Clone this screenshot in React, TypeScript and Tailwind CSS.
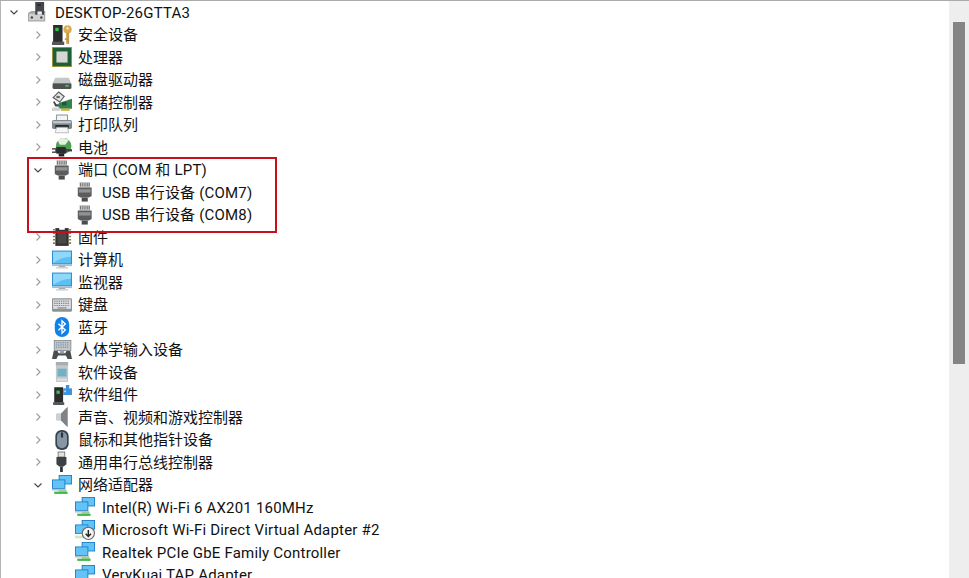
import type { ReactNode } from "react";

function Ico({ children }: { children: ReactNode }) {
  return (
    <svg width="20" height="20" viewBox="0 0 18 18" className="-mx-px shrink-0 overflow-visible">
      {children}
    </svg>
  );
}

const ComputerIcon = () => (
  <Ico>
    <path d="M0 10 L3 8 H15.5 V17.5 H0 Z" fill="#a6a6a6" />
    <rect x="1" y="10.5" width="13.5" height="6" fill="#d0d0d0" />
    <rect x="6.5" y="0" width="8" height="11.5" fill="#44474a" />
    <rect x="8.5" y="2" width="3" height="1.5" fill="#25282a" />
    <rect x="8.5" y="8.5" width="4" height="3" fill="#ececec" />
    <circle cx="3.5" cy="14" r="1.1" fill="#4b4b4b" />
    <circle cx="12" cy="14" r="1.1" fill="#4b4b4b" />
  </Ico>
);

const SecurityIcon = () => (
  <Ico>
    <rect x="1" y="0" width="8.5" height="16" fill="#2a2c2e" />
    <rect x="0" y="15" width="11" height="3" fill="#55585a" />
    <rect x="3" y="2.5" width="3" height="3" fill="#35c04a" />
    <circle cx="14" cy="4" r="3.7" fill="#d9ad55" />
    <circle cx="14" cy="3" r="1" fill="#fff4d0" />
    <rect x="12.8" y="7" width="2.6" height="10" fill="#c99a45" />
    <rect x="11.5" y="12" width="2" height="1.5" fill="#c99a45" />
  </Ico>
);

const CpuIcon = () => (
  <Ico>
    <rect x="0" y="0" width="18" height="18" fill="#a69b45" />
    <rect x="0.8" y="0.8" width="16.4" height="16.4" fill="#1f5f36" />
    <rect x="4" y="4" width="10" height="10" fill="#d6d6d2" />
  </Ico>
);

const DiskIcon = () => (
  <Ico>
    <path d="M3 7 H15 L17.5 12 H0.5 Z" fill="#c4c7c7" />
    <rect x="0.5" y="12" width="17" height="5" rx="1" fill="#4d5152" />
    <rect x="12" y="13.5" width="3" height="1.5" fill="#4fc05a" />
  </Ico>
);

const StorageIcon = () => (
  <Ico>
    <path d="M1 5 L6 0 L11 4 L7 9 Z" fill="#e6e6e6" stroke="#5f5f5f" />
    <rect x="4" y="3.5" width="3" height="2" fill="#666" />
    <path d="M1 9 L3 13 H9 V11 H4 L2 8 Z" fill="#444" />
    <path d="M6 10 L18 6 V15 H6 Z" fill="#32834e" />
    <rect x="9" y="9" width="4" height="3" fill="#1f5733" />
    <rect x="8" y="15" width="8" height="2" fill="#d6b13c" />
    <rect x="0" y="14" width="7" height="3" fill="#d2d2d2" />
  </Ico>
);

const PrinterIcon = () => (
  <Ico>
    <path d="M4 0 H14 V5 H4 Z" fill="#f4f4f4" stroke="#7d8488" strokeWidth="0.8" />
    <rect x="0" y="4.5" width="18" height="8" rx="1.5" fill="#7f888d" />
    <rect x="1" y="5.5" width="16" height="2" fill="#c4cbcf" />
    <rect x="3" y="9" width="12" height="3" fill="#26292b" />
    <path d="M4 11 H14 L15 16 H3 Z" fill="#f6f6f6" stroke="#a0a0a0" strokeWidth="0.6" />
  </Ico>
);

const BatteryIcon = () => (
  <Ico>
    <circle cx="10.5" cy="8" r="7" fill="#4f9f54" />
    <path d="M5 3 Q10 -1 15 3 L12 7 H7 Z" fill="#e3efe0" />
    <rect x="3" y="9" width="10" height="6" rx="2" fill="#2a2d2f" />
    <rect x="0" y="10" width="4" height="1.4" fill="#555" />
    <rect x="0" y="13" width="4" height="1.4" fill="#555" />
    <rect x="12" y="11" width="6" height="2" fill="#3c3f41" />
    <rect x="6" y="15" width="5" height="2.5" fill="#222" />
  </Ico>
);

const PortIcon = () => (
  <Ico>
    <rect x="4" y="0" width="9.5" height="5" fill="#c6c6c6" />
    <path d="M5 1 V4 M7 1 V4 M9 1 V4 M11 1 V4 M12.8 1 V4" stroke="#666" strokeWidth="0.8" />
    <path d="M2.5 5 H15 V12.5 L12.5 14 H5 L2.5 12.5 Z" fill="#5a5c5e" />
    <rect x="3.5" y="6.5" width="10.5" height="3" fill="#909294" />
    <rect x="6" y="14" width="5.5" height="3.6" fill="#4a4c4e" />
  </Ico>
);

const FirmwareIcon = () => (
  <Ico>
    <rect x="3" y="1" width="12" height="16" fill="#333" />
    <rect x="6.5" y="0" width="5" height="2.5" fill="#fff" />
    <path d="M0.8 2.5 H3 M0.8 5.5 H3 M0.8 8.5 H3 M0.8 11.5 H3 M0.8 14.5 H3 M15 2.5 H17.2 M15 5.5 H17.2 M15 8.5 H17.2 M15 11.5 H17.2 M15 14.5 H17.2" stroke="#8d7f4e" strokeWidth="1.4" />
    <rect x="5" y="4" width="8" height="11" fill="#484848" />
  </Ico>
);

const MonitorIcon = () => (
  <Ico>
    <rect x="0" y="0.5" width="18" height="12.5" fill="#2f8fd6" />
    <rect x="1" y="1.5" width="16" height="10.5" fill="#5cc0f4" />
    <path d="M1 1.5 H17 V6 Q8 6 1 12 Z" fill="#90d8fa" />
    <rect x="0" y="13" width="18" height="1.5" fill="#b0bcc3" />
    <rect x="6" y="14.5" width="6" height="1" fill="#9aa3a8" />
    <rect x="3.5" y="15.5" width="11" height="1.2" fill="#c9ced1" />
  </Ico>
);

const KeyboardIcon = () => (
  <Ico>
    <rect x="0" y="3" width="18" height="12" rx="1" fill="#8f9193" />
    <rect x="1" y="4" width="16" height="8.5" fill="#dcdde0" />
    <path d="M2 5.5 H16 M2 7.5 H16 M2 9.5 H16" stroke="#84878a" strokeWidth="1" strokeDasharray="1.2 0.8" />
    <rect x="5" y="11" width="8" height="1.2" fill="#8f9193" />
  </Ico>
);

const BluetoothIcon = () => (
  <Ico>
    <rect x="2.5" y="0" width="13" height="18" rx="6.5" fill="#1280e8" />
    <path d="M5.8 6 L12 11.8 L9 14.6 V3.4 L12 6.2 L5.8 12" fill="none" stroke="#fff" strokeWidth="1.2" />
  </Ico>
);

const HidIcon = () => (
  <Ico>
    <rect x="2" y="0.5" width="15" height="9" fill="#c2c7cc" stroke="#7c8084" strokeWidth="0.7" />
    <path d="M3.5 2.5 H15.5 M3.5 4.5 H15.5 M3.5 6.5 H15.5" stroke="#6f8ca3" strokeWidth="1" strokeDasharray="1.2 0.8" />
    <path d="M0 17 L1.5 10 H5 L6 12 H12 L13 10 H16.5 L18 17 H14 L12.5 14 H5.5 L4 17 Z" fill="#4b4e51" />
    <rect x="7" y="10" width="4" height="2" fill="#9a9ea1" />
  </Ico>
);

const SoftDeviceIcon = () => (
  <Ico>
    <rect x="3.5" y="0" width="11" height="18" rx="1" fill="#c4c8ca" />
    <rect x="3.5" y="0" width="11" height="3" fill="#a9adb0" />
    <rect x="5" y="6" width="8" height="7" fill="#6fb2c4" />
    <rect x="4.5" y="15" width="9" height="2" fill="#dde0e1" />
  </Ico>
);

const SoftComponentIcon = () => (
  <Ico>
    <rect x="2" y="2" width="8" height="14" fill="#2a2c2e" />
    <rect x="1" y="15.5" width="10" height="2.5" fill="#55585a" />
    <rect x="4" y="5" width="3" height="3" fill="#35c04a" />
    <rect x="10" y="3" width="8" height="6" fill="#3c94dc" />
    <rect x="12.5" y="0" width="3" height="3.5" fill="#3c94dc" />
    <rect x="11" y="5" width="1.5" height="1.5" fill="#cfe6f8" />
  </Ico>
);

const AudioIcon = () => (
  <Ico>
    <path d="M4 6 H8 L14 0 V18 L8 12 H4 Z" fill="#a3a8aa" />
    <path d="M8 6 L14 0 V18 L8 12 Z" fill="#7e8385" />
    <rect x="4" y="6" width="4" height="6" fill="#cdd0d1" />
  </Ico>
);

const MouseIcon = () => (
  <Ico>
    <rect x="3" y="0" width="12" height="18" rx="5.5" fill="#36434e" />
    <rect x="4.5" y="1.5" width="9" height="15" rx="4.5" fill="#8696a6" />
    <rect x="8" y="2" width="2" height="5" rx="1" fill="#2d353c" />
  </Ico>
);

const UsbIcon = () => (
  <Ico>
    <rect x="5.5" y="0" width="6" height="4.5" fill="#e2e2e2" stroke="#666" strokeWidth="0.7" />
    <path d="M4 4.5 H13 V11 L10.5 13 H6.5 L4 11 Z" fill="#3e4144" />
    <rect x="7.3" y="13" width="2.4" height="5" fill="#2a2d2f" />
  </Ico>
);

const Screen = ({ x, y }: { x: number; y: number }) => (
  <g>
    <rect x={x} y={y} width="12" height="8.5" fill="#1f7fc8" />
    <rect x={x + 0.8} y={y + 0.8} width="10.4" height="6.9" fill="#62c3f4" />
  </g>
);

const NetworkIcon = () => (
  <Ico>
    <rect x="6" y="13" width="7" height="2" fill="#8fd272" />
    <rect x="2" y="15" width="12" height="2" fill="#3db84a" />
    <Screen x={6} y={0} />
    <Screen x={0} y={4} />
    <rect x="0" y="12.5" width="12" height="1.5" fill="#b6c3cb" />
  </Ico>
);

const WifiDirectIcon = () => (
  <Ico>
    <rect x="0" y="14" width="9" height="2.5" fill="#cfe8c4" />
    <Screen x={6} y={0} />
    <Screen x={0} y={4} />
    <circle cx="12" cy="12" r="5.5" fill="#f4f4f4" stroke="#666b6e" />
    <path d="M12 9 V14.5 M9.6 12.4 L12 14.8 L14.4 12.4" stroke="#222" strokeWidth="1.3" fill="none" />
  </Ico>
);

type Row = { label: string; depth: 0 | 1 | 2; icon: ReactNode; open?: boolean };

const rows: Row[] = [
  { label: "DESKTOP-26GTTA3", depth: 0, icon: <ComputerIcon />, open: true },
  { label: "安全设备", depth: 1, icon: <SecurityIcon /> },
  { label: "处理器", depth: 1, icon: <CpuIcon /> },
  { label: "磁盘驱动器", depth: 1, icon: <DiskIcon /> },
  { label: "存储控制器", depth: 1, icon: <StorageIcon /> },
  { label: "打印队列", depth: 1, icon: <PrinterIcon /> },
  { label: "电池", depth: 1, icon: <BatteryIcon /> },
  { label: "端口 (COM 和 LPT)", depth: 1, icon: <PortIcon />, open: true },
  { label: "USB 串行设备 (COM7)", depth: 2, icon: <PortIcon /> },
  { label: "USB 串行设备 (COM8)", depth: 2, icon: <PortIcon /> },
  { label: "固件", depth: 1, icon: <FirmwareIcon /> },
  { label: "计算机", depth: 1, icon: <MonitorIcon /> },
  { label: "监视器", depth: 1, icon: <MonitorIcon /> },
  { label: "键盘", depth: 1, icon: <KeyboardIcon /> },
  { label: "蓝牙", depth: 1, icon: <BluetoothIcon /> },
  { label: "人体学输入设备", depth: 1, icon: <HidIcon /> },
  { label: "软件设备", depth: 1, icon: <SoftDeviceIcon /> },
  { label: "软件组件", depth: 1, icon: <SoftComponentIcon /> },
  { label: "声音、视频和游戏控制器", depth: 1, icon: <AudioIcon /> },
  { label: "鼠标和其他指针设备", depth: 1, icon: <MouseIcon /> },
  { label: "通用串行总线控制器", depth: 1, icon: <UsbIcon /> },
  { label: "网络适配器", depth: 1, icon: <NetworkIcon />, open: true },
  { label: "Intel(R) Wi-Fi 6 AX201 160MHz", depth: 2, icon: <NetworkIcon /> },
  { label: "Microsoft Wi-Fi Direct Virtual Adapter #2", depth: 2, icon: <WifiDirectIcon /> },
  { label: "Realtek PCIe GbE Family Controller", depth: 2, icon: <NetworkIcon /> },
  { label: "VeryKuai TAP Adapter", depth: 2, icon: <NetworkIcon /> },
];

function Chevron({ open }: { open?: boolean }) {
  return (
    <svg width="16" height="16" viewBox="0 0 16 16" className="shrink-0">
      {open ? (
        <path d="M4.5 6.5 L8 10 L11.5 6.5" fill="none" stroke="#444" strokeWidth="1.1" />
      ) : (
        <path d="M6.5 4.5 L10 8 L6.5 11.5" fill="none" stroke="#9a9a9a" strokeWidth="1.1" />
      )}
    </svg>
  );
}

export default function App() {
  return (
    <div className="relative flex h-[578px] w-[969px] overflow-hidden border-t border-t-[#ababab] bg-white font-['Roboto','Noto_Sans_CJK_SC',sans-serif] text-[15px] text-[#111111]">
      {/* Device tree */}
      <div className="min-w-0 flex-1 border-l border-l-[#b5b5b5]">
        {rows.map((row) => (
          <div
            key={row.label}
            className={
              "flex h-[22.5px] items-center gap-[7px] whitespace-nowrap " +
              (row.depth === 0 ? "pl-[5px]" : row.depth === 1 ? "pl-[29px]" : "pl-[52px]")
            }
          >
            {row.depth === 2 ? <span className="w-4 shrink-0" /> : <Chevron open={row.open} />}
            {row.icon}
            <span
              className={
                "pt-[2px] leading-none " +
                (/[A-Za-z]/.test(row.label) ? "tracking-[0.2px] " : "") +
                (row.depth === 1 ? "" : "ml-px")
              }
            >
              {row.label}
            </span>
          </div>
        ))}
      </div>

      {/* Scrollbar */}
      <div className="w-5 shrink-0 bg-[#eeeeee] px-1 pt-[21px]">
        <div className="h-[342px] bg-[#858585]" />
      </div>

      {/* Red highlight */}
      <div className="absolute left-[27px] top-[156px] h-[76px] w-[250px] border-2 border-[#c8101c]" />
    </div>
  );
}
